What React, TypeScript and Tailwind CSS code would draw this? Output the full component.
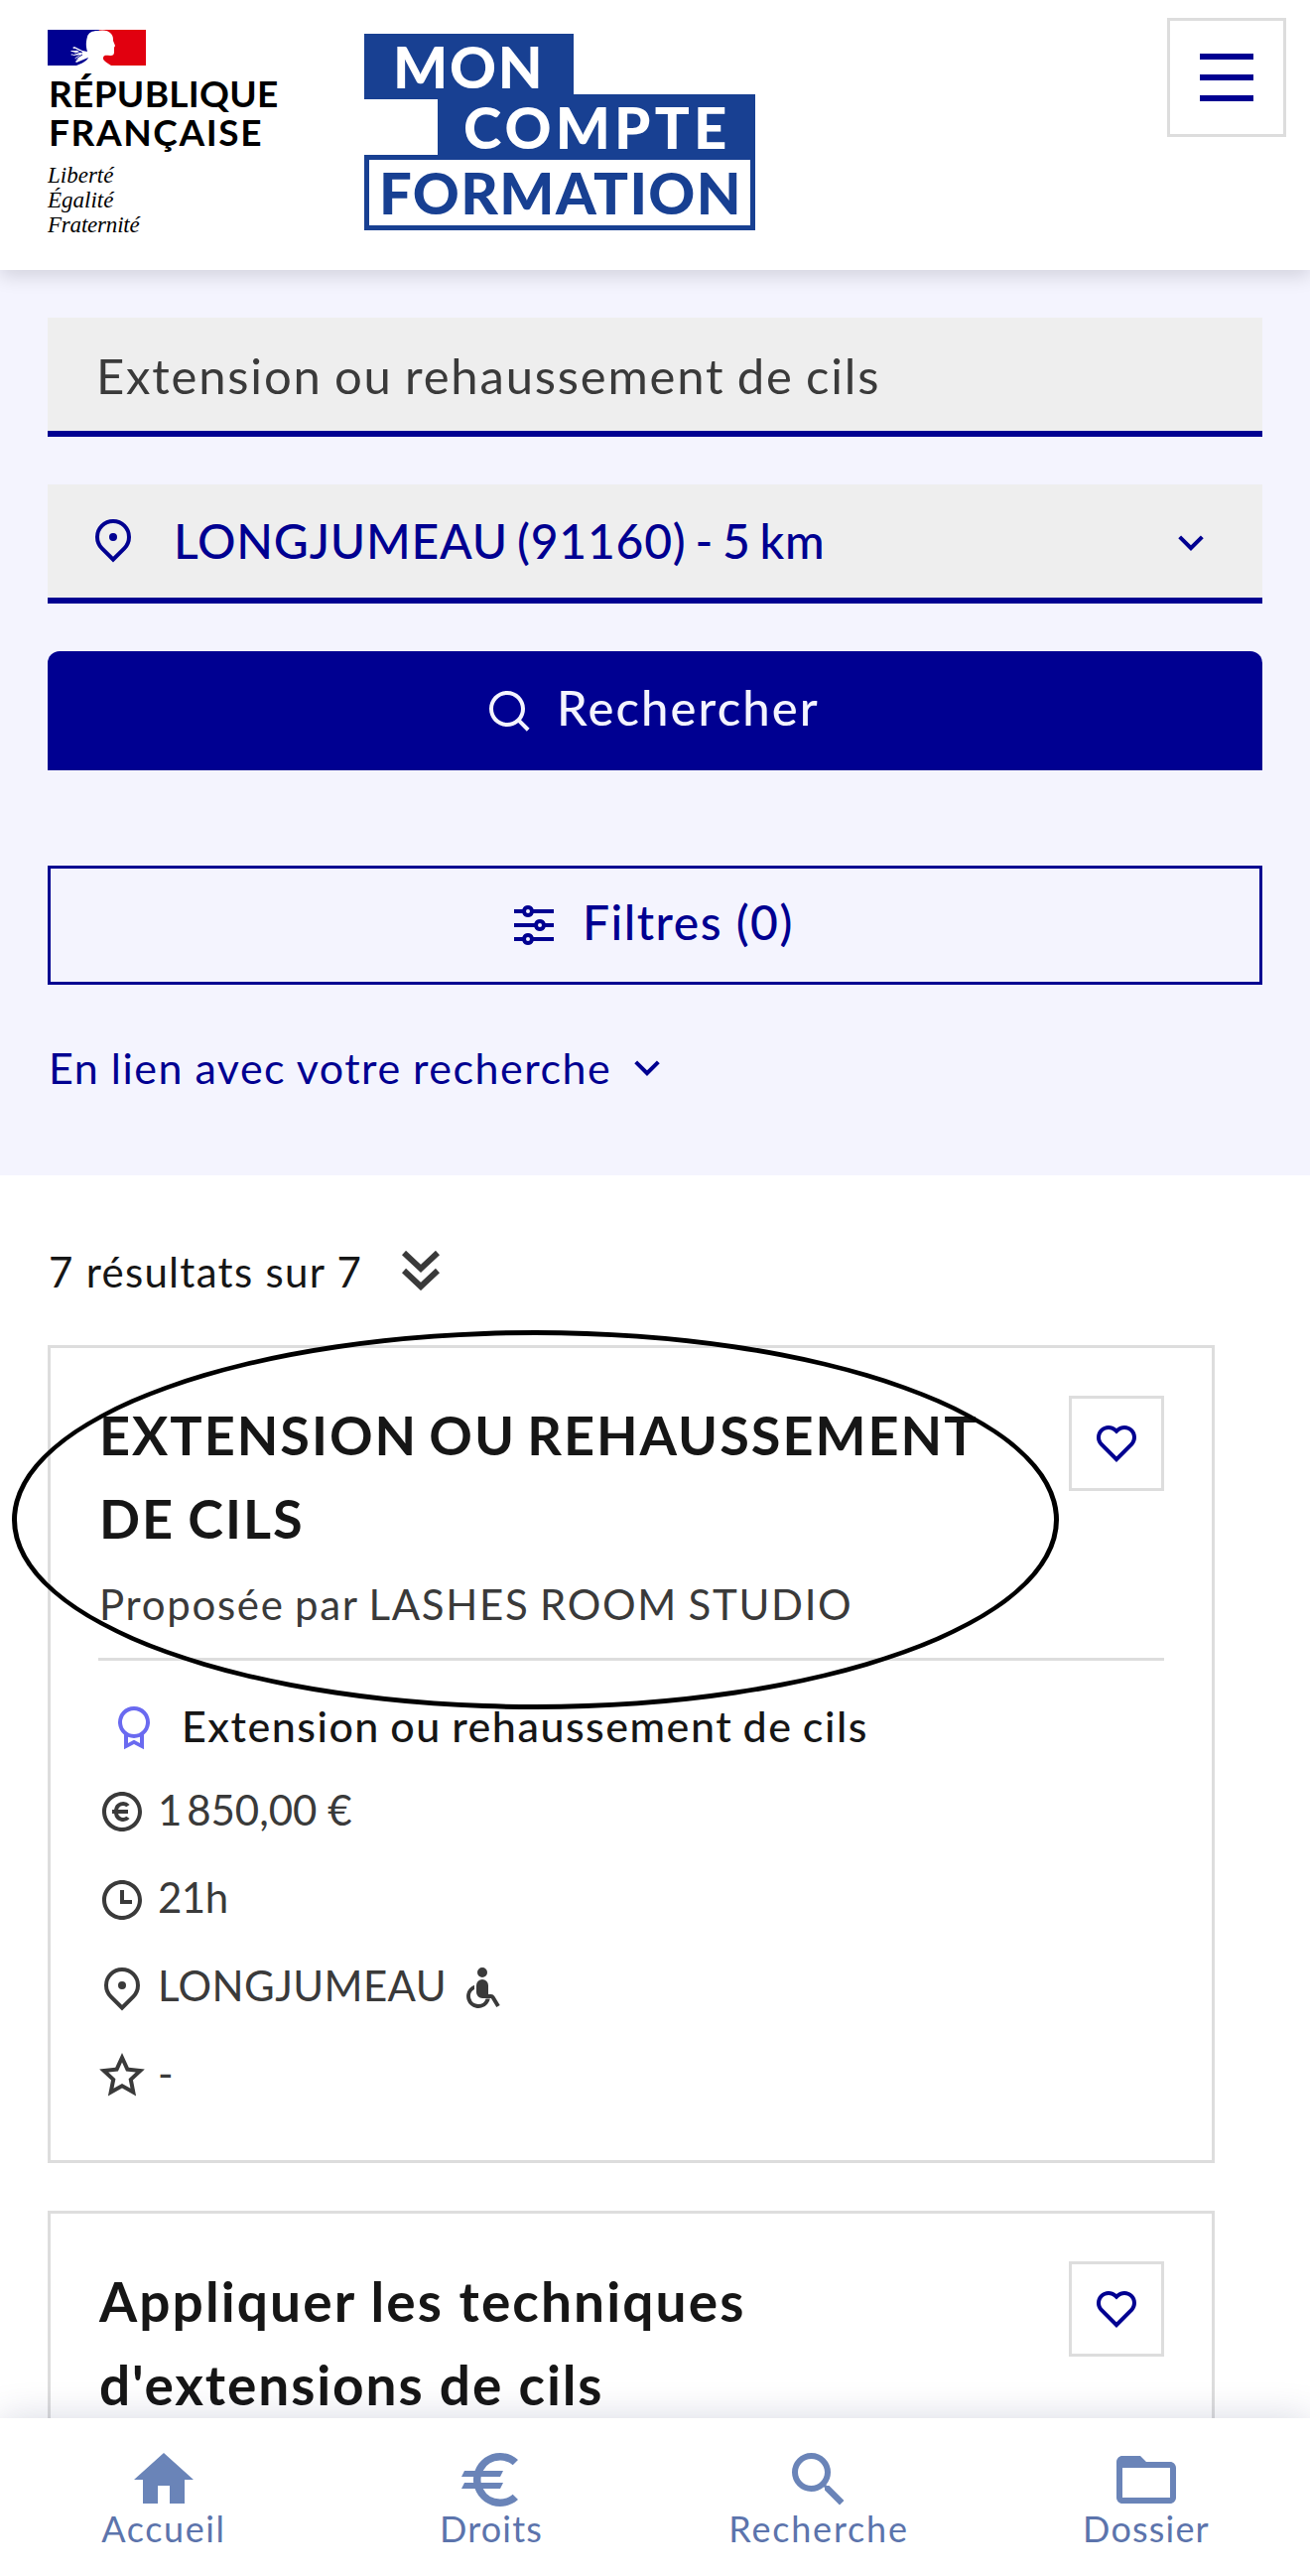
import type { ReactNode } from "react";
import { MdEuro, MdFolderOpen, MdHome, MdSearch } from "react-icons/md";

// 24-unit icon outlines, drawn at 48px
const ICONS = {
  pin: "M12 20.9l4.95-4.95a7 7 0 1 0-9.9 0L12 20.9zm0 2.828l-6.364-6.364a9 9 0 1 1 12.728 0L12 23.728zM12 13a2 2 0 1 0 0-4 2 2 0 0 0 0 4z",
  chevron: "M12 13.172l4.95-4.95 1.414 1.414L12 16 5.636 9.636 7.05 8.222z",
  search:
    "M18.031 16.617l4.283 4.282-1.415 1.415-4.282-4.283A8.96 8.96 0 0 1 11 20c-4.968 0-9-4.032-9-9s4.032-9 9-9 9 4.032 9 9a8.96 8.96 0 0 1-1.969 5.617zm-2.006-.742A6.977 6.977 0 0 0 18 11c0-3.868-3.133-7-7-7-3.868 0-7 3.132-7 7 0 3.867 3.132 7 7 7a6.977 6.977 0 0 0 4.875-1.975l.15-.15z",
  filters:
    "M6.17 18a3.001 3.001 0 0 1 5.66 0H22v2H11.83a3.001 3.001 0 0 1-5.66 0H2v-2h4.17zm6-7a3.001 3.001 0 0 1 5.66 0H22v2h-4.17a3.001 3.001 0 0 1-5.66 0H2v-2h10.17zm-6-7a3.001 3.001 0 0 1 5.66 0H22v2H11.83a3.001 3.001 0 0 1-5.66 0H2V4h4.17zM9 6a1 1 0 1 0 0-2 1 1 0 0 0 0 2zm6 7a1 1 0 1 0 0-2 1 1 0 0 0 0 2zm-6 7a1 1 0 1 0 0-2 1 1 0 0 0 0 2z",
  heart:
    "M12.001 4.529c2.349-2.109 5.979-2.039 8.242.228 2.262 2.268 2.34 5.88.236 8.236l-8.48 8.492-8.478-8.492c-2.104-2.356-2.025-5.974.236-8.236 2.265-2.264 5.888-2.34 8.244-.228zm6.826 1.641c-1.5-1.502-3.92-1.563-5.49-.153l-1.335 1.198-1.336-1.197c-1.575-1.412-3.99-1.35-5.494.154-1.49 1.49-1.565 3.875-.192 5.451L12 18.654l7.02-7.03c1.374-1.577 1.299-3.959-.193-5.454z",
  award:
    "M17 15.245V22.6L12 20l-5 2.6v-7.355a8 8 0 1 1 10 0zm-8 1.173v3.05l3-1.6 3 1.6v-3.05A7.978 7.978 0 0 1 12 17c-1.062 0-2.075-.207-3-.582zM12 15a6 6 0 1 0 0-12 6 6 0 0 0 0 12z",
  euro: "M12 22C6.477 22 2 17.523 2 12S6.477 2 12 2s10 4.477 10 10-4.477 10-10 10zm0-2a8 8 0 1 0 0-16 8 8 0 0 0 0 16zm-1.95-9H15v2h-4.95a2.5 2.5 0 0 0 4.064 1.41l1.7 1.133A4.5 4.5 0 0 1 8.028 13H7v-2h1.027a4.5 4.5 0 0 1 7.788-2.543L14.114 9.59A2.5 2.5 0 0 0 10.05 11z",
  clock:
    "M12 22C6.477 22 2 17.523 2 12S6.477 2 12 2s10 4.477 10 10-4.477 10-10 10zm0-2a8 8 0 1 0 0-16 8 8 0 0 0 0 16zm1-8h4v2h-6V7h2v5z",
  star: "M12 18.26l-7.053 3.948 1.575-7.928L.587 8.792l8.027-.952L12 .5l3.386 7.34 8.027.952-5.935 5.488 1.575 7.928L12 18.26zm0-2.292l4.247 2.377-.949-4.773 3.573-3.305-4.833-.573L12 5.275l-2.038 4.42-4.833.572 3.573 3.305-.949 4.773L12 15.968z",
  wheelchair:
    "M8 10.341v2.194A3.999 3.999 0 0 0 10 20a4 4 0 0 0 3.8-2.75h2.1A6 6 0 1 1 8 10.341zM12 17a3 3 0 0 1-3-3v-3.5a3 3 0 0 1 6 0V15h1.434a2 2 0 0 1 1.715.971l2.708 4.515-1.714 1.028L16.433 17zM12 6.5a2.5 2.5 0 1 0 0-5 2.5 2.5 0 0 0 0 5z",
};

function Icon({ name, className = "" }: { name: keyof typeof ICONS; className?: string }) {
  return (
    <svg viewBox="0 0 24 24" className={`size-12 shrink-0 fill-current ${className}`}>
      <path d={ICONS[name]} />
    </svg>
  );
}

function RepubliqueLogo() {
  return (
    <div className="ml-12 mt-[30px] w-[250px] text-black">
      <svg viewBox="0 0 99 36" className="h-9 w-[99px]">
        <path fill="#000091" d="M0 0h52v36H0z" />
        <path fill="#e1000f" d="M52 0h47v36H52z" />
        {/* Marianne profile with her hair blowing left */}
        <path
          fill="#fff"
          d="M40 7c1-4 5-6 10-6 5-1 11-1 14 3 2 2 2 5 2 7l2 5c0 1-1 1-1 2v4c0 3-1 4-4 4-4 0-6-1-7 2s4 5 8 8H29c5-2 10-4 12-8-4 2-8 3-12 5l-1-1 3-3-4 1 1-2 5-3-7 1-3-1 6-2-5-1-1-1 7 0-5-3 2-1 8 4 5 1c-1-4-2-8 0-15z"
        />
        <path stroke="#000091" strokeWidth="1" fill="none" d="M27 19l8 4M25 25l9-3M27 30l8-5" />
      </svg>
      <div className="mt-2 text-[37px] font-bold leading-[39px]">
        <p className="pl-px tracking-[0.3px]">RÉPUBLIQUE</p>
        <p className="pl-px tracking-[1.6px]">FRANÇAISE</p>
      </div>
      <div className="mt-3 font-['Liberation_Serif',serif] text-[23px] italic leading-[25px]">
        <p>Liberté</p>
        <p>Égalité</p>
        <p className="-tracking-[0.2px]">Fraternité</p>
      </div>
    </div>
  );
}

function CompteFormationLogo() {
  return (
    <div className="ml-[69px] mt-[34px] flex w-[394px] flex-col text-[58px] font-black leading-[65px] text-white">
      <p className="h-[66px] w-[211px] bg-[#184092] pl-[29px] tracking-[1.8px]">MON</p>
      <p className="-mt-[5px] ml-[74px] h-[66px] bg-[#184092] pl-[26px] tracking-[4.2px]">COMPTE</p>
      <p className="-mt-[5px] h-[76px] border-[5px] border-[#184092] bg-white pl-[10px] tracking-[1.4px] text-[#184092]">
        FORMATION
      </p>
    </div>
  );
}

function FavoriteButton() {
  return (
    <button className="flex size-24 shrink-0 items-center justify-center border-[3px] border-[#ddd] text-[#000091]">
      <Icon name="heart" />
    </button>
  );
}

function InfoRow({ icon, children }: { icon: keyof typeof ICONS; children: ReactNode }) {
  return (
    <li className="flex h-[88.5px] items-center">
      <Icon name={icon} className="mr-3 mt-1" />
      {children}
    </li>
  );
}

function NavItem({ icon, label, spacing }: { icon: ReactNode; label: string; spacing: string }) {
  return (
    <a className="flex flex-1 flex-col items-center pt-[26px] text-[#5c74ac]">
      <span className="text-[72px] leading-none text-[#6a84b8]">{icon}</span>
      <span className={`-mt-[9px] text-[36px] leading-[44px] ${spacing}`}>{label}</span>
    </a>
  );
}

export default function App() {
  return (
    <div className="relative flex h-[2595px] w-[1320px] flex-col overflow-hidden bg-white font-['Lato',sans-serif] text-[#161616]">
      {/* Header */}
      <header className="relative z-10 flex h-[272px] shrink-0 items-start bg-white shadow-[0_6px_18px_rgba(0,0,18,0.14)]">
        <RepubliqueLogo />
        <CompteFormationLogo />
        <button className="ml-auto mr-6 mt-[18px] flex size-[120px] flex-col items-center gap-[15px] border-[3px] border-[#ddd] pt-[33px]">
          <span className="h-1.5 w-[54px] bg-[#000091]" />
          <span className="h-1.5 w-[54px] bg-[#000091]" />
          <span className="h-1.5 w-[54px] bg-[#000091]" />
        </button>
      </header>

      {/* Search form */}
      <section className="h-[912px] shrink-0 bg-[#f4f4fe] px-12 pt-12 text-[48px] text-[#000091]">
        <div className="flex h-[120px] items-center border-b-6 border-[#000091] bg-[#eee] pl-[49px] pt-[3px] text-[#3a3a3a]">
          <span className="text-[49px] tracking-[1.8px] [word-spacing:-2px]">Extension ou rehaussement de cils</span>
        </div>
        <div className="mt-12 flex h-[120px] items-center border-b-6 border-[#000091] bg-[#eee] pl-[42px] pr-12 font-medium">
          <Icon name="pin" className="-mt-1" />
          <span className="ml-[37px] tracking-[0.8px] [word-spacing:-4px]">LONGJUMEAU (91160) - 5 km</span>
          <Icon name="chevron" className="ml-auto mt-1" />
        </div>
        <button className="mt-12 flex h-[120px] w-full items-center rounded-t-xl bg-[#000091] pl-[441px] font-medium text-[#f4f4fe]">
          <Icon name="search" />
          <span className="ml-6 pb-1.5 text-[49px] tracking-[2.1px]">Rechercher</span>
        </button>
        <button className="mt-24 flex h-[120px] w-full items-center border-[3px] border-[#000091] pl-[463px] font-medium">
          <Icon name="filters" />
          <span className="ml-[25px] pb-1.5 tracking-[1.5px]">Filtres (0)</span>
        </button>
        <div className="mt-[54px] flex h-[60px] items-center text-[42px]">
          <span className="pl-px text-[43px] tracking-[1.5px] [word-spacing:-1px]">En lien avec votre recherche</span>
          <Icon name="chevron" className="ml-3" />
        </div>
      </section>

      {/* Results */}
      <main className="min-h-0 flex-1 overflow-hidden px-12 pt-[66px] text-[42px]">
        <div className="flex h-[63px] items-center">
          <span className="pl-px tracking-[1.3px]">7 résultats sur 7</span>
          <svg viewBox="0 0 38 40" className="-mt-1 ml-10 h-10 w-[38px] fill-none stroke-[#3a3a3a] stroke-[6]">
            <path d="M2 2l17 16L36 2M2 20l17 16L36 20" />
          </svg>
        </div>

        <article className="mt-[42px] h-[824px] w-[1176px] border-[3px] border-[#ddd] pl-12 pr-12 pt-12">
          <div className="flex items-start justify-between">
            <h2 className="-mt-[2px] pl-px text-[54px] font-bold leading-[84px]">
              <span className="tracking-[2px] [word-spacing:-4px]">EXTENSION OU REHAUSSEMENT</span>
              <br />
              <span className="tracking-[2px] [word-spacing:-2px]">DE CILS</span>
            </h2>
            <FavoriteButton />
          </div>
          <p className="mt-[11px] h-[90px] border-b-[3px] border-[#ddd] pl-px leading-[66px] tracking-[1.7px] text-[#3a3a3a] [word-spacing:-2px]">
            Proposée par LASHES ROOM STUDIO
          </p>
          <div className="mt-[31px] flex h-[70px] items-center pl-3 font-medium">
            <Icon name="award" className="mt-1 text-[#6a6af0]" />
            <span className="ml-6 text-[43px] tracking-[1.5px] [word-spacing:-2px]">
              Extension ou rehaussement de cils
            </span>
          </div>
          <ul className="mt-[5px] text-[#3a3a3a]">
            <InfoRow icon="euro">
              <span className="whitespace-pre [word-spacing:-6px]">1 </span>
              <span>850,00 €</span>
            </InfoRow>
            <InfoRow icon="clock">
              <span className="-tracking-[0.5px]">21h</span>
            </InfoRow>
            <InfoRow icon="pin">
              <span className="tracking-[0.4px]">LONGJUMEAU</span>
              <Icon name="wheelchair" className="ml-3 mt-1.5" />
            </InfoRow>
            <InfoRow icon="star">-</InfoRow>
          </ul>
        </article>

        <article className="mt-12 h-[824px] w-[1176px] border-[3px] border-[#ddd] px-12 pt-12">
          <div className="flex items-start justify-between">
            <h2 className="-mt-[2px] pl-px text-[55px] font-bold leading-[84px]">
              <span className="tracking-[2.1px]">Appliquer les techniques</span>
              <br />
              <span className="tracking-[1.9px]">d'extensions de cils</span>
            </h2>
            <FavoriteButton />
          </div>
        </article>
      </main>

      {/* Bottom navigation */}
      <nav className="relative z-10 flex h-[159px] shrink-0 bg-white shadow-[0_0_36px_rgba(0,20,80,0.16)]">
        <NavItem icon={<MdHome />} label="Accueil" spacing="tracking-[1.6px]" />
        <NavItem icon={<MdEuro />} label="Droits" spacing="tracking-[1.2px]" />
        <NavItem icon={<MdSearch />} label="Recherche" spacing="tracking-[1.8px]" />
        <NavItem icon={<MdFolderOpen />} label="Dossier" spacing="tracking-[1.2px]" />
      </nav>

      {/* Highlight around the first result */}
      <div className="absolute left-3 top-[1340px] h-[382px] w-[1055px] rounded-[50%] border-[5px] border-black" />
    </div>
  );
}
